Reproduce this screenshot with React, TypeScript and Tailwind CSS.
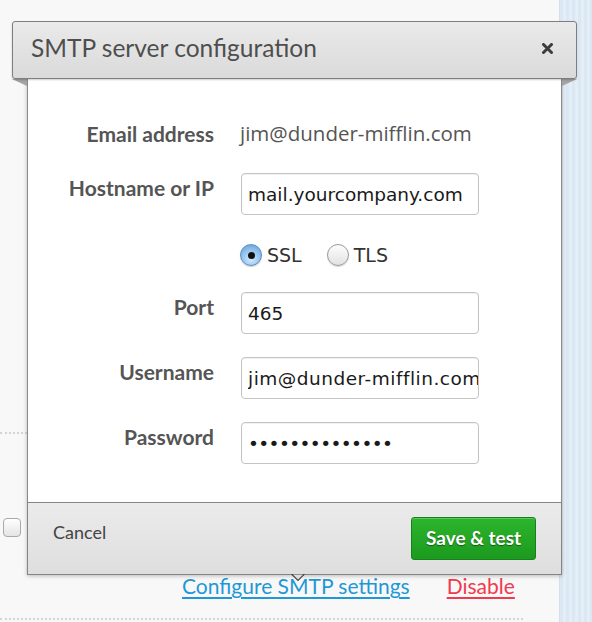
import React from "react";

function Radio({ checked, label }: { checked: boolean; label: string }) {
  return (
    <div className="flex items-center">
      {checked ? (
        <div className="w-[22px] h-[22px] rounded-full border border-[#5b8fc4] bg-[radial-gradient(circle_at_50%_70%,#d4ecff_0%,#9cc8ef_45%,#5f9bd6_100%)] shadow-[0_1px_1px_rgba(0,0,0,0.2)] flex items-center justify-center">
          <div className="w-[7px] h-[7px] rounded-full bg-[#111]" />
        </div>
      ) : (
        <div className="w-[22px] h-[22px] rounded-full border border-[#9a9a9a] bg-gradient-to-b from-[#fdfdfd] to-[#e2e2e2] shadow-[0_1px_1px_rgba(0,0,0,0.15)]" />
      )}
      <span className="ml-[5px] text-[19px] text-[#333] leading-[24px] font-['DejaVu_Sans',sans-serif]">
        {label}
      </span>
    </div>
  );
}

function Field({ value, type = "text", extra = "" }: { value: string; type?: string; extra?: string }) {
  return (
    <input
      readOnly
      type={type}
      value={value}
      className={
        "block w-[238px] h-[42px] rounded-[4px] border border-[#c4c4c4] bg-white pl-[6px] pr-0 text-[18.5px] text-[#1a1a1a] font-['DejaVu_Sans',sans-serif] outline-none shadow-[inset_0_1px_1px_rgba(0,0,0,0.06)] " +
        extra
      }
    />
  );
}

function Label({ children }: { children: React.ReactNode }) {
  return (
    <div className="w-[186px] text-right font-bold text-[21px] leading-[28px] text-[#555] pt-[1px]">
      {children}
    </div>
  );
}

export default function App() {
  return (
    <div className="relative w-[592px] h-[622px] overflow-hidden bg-[#f8f8f8] flex font-['Lato',sans-serif]">
      {/* underlying page */}
      <div className="flex-1 flex flex-col">
        <div className="h-[432px]" />
        <div className="h-0 border-t-2 border-dotted border-[#d4d4d4] w-[523px]" />
        <div className="h-[84px]" />
        <div className="ml-[3px] w-[18px] h-[19px] rounded-[4px] border border-[#a9a9a9] bg-gradient-to-b from-white to-[#e4e4e4]" />
        <div className="mt-[35px] flex items-center pl-[182px] text-[21px] leading-[28px]">
          <span className="text-[#1f98d6] underline underline-offset-[3px]">Configure SMTP settings</span>
          <span className="ml-[37px] text-[#f23a4e] underline underline-offset-[3px]">Disable</span>
        </div>
        <div className="mt-[18px] h-0 border-t-2 border-dotted border-[#d4d4d4] w-[523px]" />
      </div>
      <div className="w-[33px] border-l border-[#d3dfe9] bg-[repeating-linear-gradient(90deg,#dbe7f2_0px,#dbe7f2_3px,#e4eef7_3px,#e4eef7_6px)]" />

      {/* modal */}
      <div className="absolute left-[12px] top-[21px] w-[565px]">
        <div className="relative z-10 h-[58px] rounded-[3px] border border-[#7e7e7e] bg-gradient-to-b from-[#eaeaea] to-[#dadada] shadow-[0_1px_2px_rgba(0,0,0,0.2)] flex items-center justify-between pl-[18px] pr-[23px]">
          <span className="text-[24.5px] leading-[30px] pb-[5px] text-[#4e4e4e]">SMTP server configuration</span>
          <svg width="11" height="11" viewBox="0 0 11 11" className="mb-[3px]">
            <path d="M1.5 1.5 L9.5 9.5 M9.5 1.5 L1.5 9.5" stroke="#3c3c3c" strokeWidth="3" strokeLinecap="round" />
          </svg>
        </div>
        <svg width="15" height="7" className="absolute left-0 top-[58px]">
          <polygon points="0,0 15,0 15,7" fill="#a3a3a3" />
        </svg>
        <svg width="15" height="7" className="absolute right-0 top-[58px]">
          <polygon points="0,0 15,0 0,7" fill="#a3a3a3" />
        </svg>

        <div className="mx-[15px] shadow-[0_1px_4px_rgba(0,0,0,0.25)]">
          {/* body */}
          <div className="bg-white border-x border-[#8a8a8a] h-[423px] pt-[40px] flex flex-col">
            <div className="flex">
              <Label>Email address</Label>
              <div className="ml-[26px] text-[20.5px] leading-[28px] text-[#555] font-['Open_Sans',sans-serif]">jim@dunder-mifflin.com</div>
            </div>
            <div className="flex mt-[25px]">
              <Label>Hostname or IP</Label>
              <div className="ml-[27px] flex">
                <Field value="mail.yourcompany.com" />
              </div>
            </div>
            <div className="flex mt-[28px] ml-[212px] gap-[25px]">
              <Radio checked label="SSL" />
              <Radio checked={false} label="TLS" />
            </div>
            <div className="flex mt-[25px]">
              <Label>Port</Label>
              <div className="ml-[27px] flex">
                <Field value="465" />
              </div>
            </div>
            <div className="flex mt-[23px]">
              <Label>Username</Label>
              <div className="ml-[27px] flex">
                <Field value="jim@dunder-mifflin.com" extra="tracking-[0.5px]" />
              </div>
            </div>
            <div className="flex mt-[23px]">
              <Label>Password</Label>
              <div className="ml-[27px] flex">
                <Field type="password" value="abcdefghijklmn" extra="tracking-[-0.6px]" />
              </div>
            </div>
          </div>
          {/* footer */}
          <div className="relative h-[73px] border border-[#858585] bg-gradient-to-b from-[#ebebeb] to-[#dedede] flex items-start justify-between pl-[25px] pr-[25px] pt-[14px]">
            <span className="text-[18px] leading-[26px] text-[#444] mt-[2px]">Cancel</span>
            <div className="w-[125px] h-[43px] rounded-[3px] border border-[#16801b] bg-gradient-to-b from-[#2cb52c] to-[#1c9a1f] flex items-center justify-center shadow-[inset_0_1px_0_rgba(255,255,255,0.25)]">
              <span className="text-white font-bold text-[19px] [text-shadow:0_1px_1px_rgba(0,0,0,0.45)]">Save &amp; test</span>
            </div>
            <svg width="14" height="8" className="absolute left-[263px] top-full">
              <polygon points="0.5,0 7,6.5 13.5,0" fill="#dedede" stroke="#444" strokeWidth="1.2" />
            </svg>
          </div>
        </div>
      </div>
    </div>
  );
}
